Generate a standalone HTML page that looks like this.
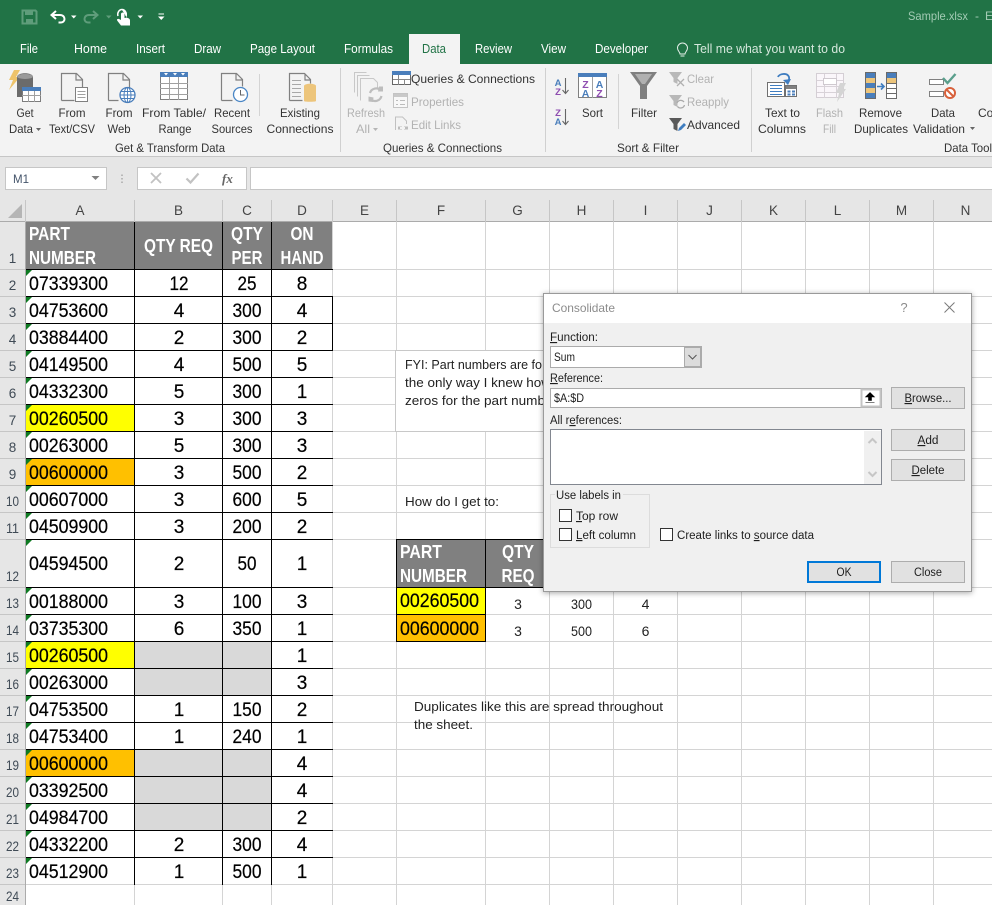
<!DOCTYPE html>
<html><head><meta charset="utf-8"><title>Sample.xlsx - Excel</title>
<style>
html,body{margin:0;padding:0;width:992px;height:905px;overflow:hidden;background:#fff}
svg{display:block;position:absolute;left:0;top:0}
text{font-family:"Liberation Sans",Arial,sans-serif;white-space:pre}
.t{font-size:12.5px;fill:#fff}
.r{font-size:12px;fill:#333;text-anchor:middle}
.rl{font-size:12px;fill:#333}
.g{font-size:12px;fill:#b2b2b2;text-anchor:middle}
.gl{font-size:12px;fill:#b2b2b2}
.c{font-size:13.5px;fill:#444;text-anchor:middle}
.n{font-size:13.5px;fill:#3f4a55;text-anchor:middle}
.a{font-size:19px;fill:#000;stroke:#000;stroke-width:.2}
.m{font-size:19px;fill:#000;text-anchor:middle;stroke:#000;stroke-width:.2}
.h{font-size:18px;font-weight:bold;fill:#fff}
.hm{font-size:18px;font-weight:bold;fill:#fff;text-anchor:middle}
.s{font-size:14px;fill:#222;text-anchor:middle}
.k{font-size:13px;fill:#222}
.d{font-size:11.5px;fill:#1e1e1e}
.dm{font-size:11.5px;fill:#1e1e1e;text-anchor:middle}
.u{text-decoration:underline}
</style></head><body>
<svg width="992" height="905" viewBox="0 0 992 905" xmlns="http://www.w3.org/2000/svg">
<defs>
<filter id="sh" x="-5%" y="-5%" width="110%" height="110%"><feDropShadow dx="0" dy="1" stdDeviation="3" flood-color="#000" flood-opacity=".35"/></filter>
</defs>
<rect width="992" height="905" fill="#fff"/>

<!-- Title bar -->
<rect width="992" height="64" fill="#217346"/>
<g id="qat">
<path d="M22.500 10.500h13l1 1v12h-14z" fill="none" stroke="#5f9d7b" stroke-width="2"/>
<rect x="25" y="10" width="8" height="5" fill="#5f9d7b"/><rect x="26" y="19" width="7" height="5" fill="#5f9d7b"/>
<path d="M56 11l-4.500 4 4.500 4M52 15h8c3.500 0 4.500 2.500 4.500 4s-1 3.500-4 3.500h-2" fill="none" stroke="#fff" stroke-width="2"/>
<path d="M71 15.500h5.500l-2.750 3z" fill="#fff"/>
<path d="M93 11l4.500 4-4.500 4M97 15h-8c-3.500 0-4.500 2.500-4.500 4s1 3.500 4 3.500h2" fill="none" stroke="#5f9d7b" stroke-width="2"/>
<path d="M106 15.500h5.500l-2.750 3z" fill="#5f9d7b"/>
<path d="M122 10c3 0 5 2 5 4.500 0 1.500-.5 2.500-1.500 3.500h-1v-4c0-2-3.500-2-3.500 0v6l-2 -1c-2-.5-2.500 1-1.500 2l3.500 4.500h9v-5c0-2-2-2.500-4-3v-1.500" fill="#fff"/>
<path d="M118 16c-1-3 1-6.500 4-6.500s5 3.500 4 6.500" fill="none" stroke="#fff" stroke-width="1.500"/>
<path d="M137.500 15.500h5.500l-2.750 3z" fill="#fff"/>
<rect x="158.500" y="13.500" width="5.500" height="1" fill="#fff"/><path d="M158 16.500h6.500l-3.250 3.500z" fill="#fff"/>
</g>
<text x="908" y="20" font-size="12" fill="#a3cbb4" textLength="60" lengthAdjust="spacingAndGlyphs">Sample.xlsx</text>
<text x="975" y="20" font-size="12" fill="#a3cbb4">-</text>
<text x="985" y="20" font-size="12" fill="#a3cbb4">E</text>

<!-- Tabs -->
<rect x="409" y="34" width="51" height="30" fill="#f3f3f3"/>
<text class="t" x="20" y="53" textLength="18" lengthAdjust="spacingAndGlyphs">File</text>
<text class="t" x="74" y="53" textLength="33" lengthAdjust="spacingAndGlyphs">Home</text>
<text class="t" x="136" y="53" textLength="29" lengthAdjust="spacingAndGlyphs">Insert</text>
<text class="t" x="194" y="53" textLength="27" lengthAdjust="spacingAndGlyphs">Draw</text>
<text class="t" x="250" y="53" textLength="65" lengthAdjust="spacingAndGlyphs">Page Layout</text>
<text class="t" x="344" y="53" textLength="49" lengthAdjust="spacingAndGlyphs">Formulas</text>
<text class="t" x="422" y="53" style="fill:#217346" textLength="24" lengthAdjust="spacingAndGlyphs">Data</text>
<text class="t" x="475" y="53" textLength="37" lengthAdjust="spacingAndGlyphs">Review</text>
<text class="t" x="541" y="53" textLength="25" lengthAdjust="spacingAndGlyphs">View</text>
<text class="t" x="595" y="53" textLength="53" lengthAdjust="spacingAndGlyphs">Developer</text>
<path d="M680 54c0-2-2.500-3-2.500-6a5 5 0 0 1 10 0c0 3-2.500 4-2.500 6zM680.500 56h4" fill="none" stroke="#e6f0ea" stroke-width="1"/>
<text class="t" x="694" y="53" style="fill:#d5e7dc" textLength="151" lengthAdjust="spacingAndGlyphs">Tell me what you want to do</text>

<!-- Ribbon -->
<rect y="64" width="992" height="92" fill="#f3f3f3"/>
<rect y="156" width="992" height="1" fill="#c6c6c6"/>
<rect y="157" width="992" height="65" fill="#e6e6e6"/>
<path d="M340.500 68v84M545.500 68v84M751.500 68v84" stroke="#d0d0d0"/>
<path d="M259.500 74v42M618.500 74v55" stroke="#d4d4d4"/>

<!-- Get Data -->
<path d="M14 70h6l-4 7h4l-11 13 4-10H9z" fill="#eec36a"/>
<path d="M17 77c0-5 16-5 16 0v20H17z" fill="#6b6b6b"/>
<ellipse cx="25" cy="76.500" rx="8" ry="2.500" fill="#9a9a9a"/>
<rect x="22.500" y="87.500" width="18" height="14" fill="#fff" stroke="#7d7d7d"/>
<rect x="22" y="87" width="19" height="4" fill="#4a7ebb"/>
<path d="M22 95.500h19M28.500 91v11M34.500 91v11" stroke="#a0a0a0"/>
<!-- From Text -->
<path d="M61.500 100.500v-27h15l6 6v8M76 73.500v6.500h6.500M61.500 100.500h13" fill="none" stroke="#808080" stroke-width="1.200"/>
<rect x="75.500" y="87.500" width="12" height="14" fill="#fff" stroke="#808080"/>
<path d="M77.500 91.500h8M77.500 94.500h8M77.500 97.500h8" stroke="#a0a0a0"/>
<!-- From Web -->
<path d="M108.500 100.500v-27h15l6 6v8M123 73.500v6.500h6.500M108.500 100.500h10" fill="none" stroke="#808080" stroke-width="1.200"/>
<circle cx="127.500" cy="95" r="7.500" fill="#fff" stroke="#4a7ebb" stroke-width="1.300"/>
<ellipse cx="127.500" cy="95" rx="3.500" ry="7.500" fill="none" stroke="#4a7ebb"/>
<path d="M120 95h15M121 91.500h13M121 98.500h13M127.500 87.500v15" stroke="#4a7ebb" stroke-width=".9"/>
<!-- From Table -->
<rect x="160.500" y="72.500" width="27" height="27" fill="#fff" stroke="#808080"/>
<rect x="160" y="72" width="28" height="5" fill="#4a7ebb"/>
<path d="M160 83.500h28M160 88.500h28M160 94.500h28M169.500 77v23M178.500 77v23" stroke="#a0a0a0"/>
<path d="M164 73h4l-2 2.500zM173 73h4l-2 2.500zM181 73h4l-2 2.500z" fill="#fff"/>
<!-- Recent -->
<path d="M221.500 100.500v-27h15l6 6v7M236 73.500v6.500h6.500M221.500 100.500h11" fill="none" stroke="#808080" stroke-width="1.200"/>
<circle cx="240.500" cy="94.500" r="7" fill="#fff" stroke="#4a86c5" stroke-width="1.300"/>
<path d="M240.500 90v5h4" fill="none" stroke="#666"/>
<!-- Existing -->
<path d="M289.500 100.500v-27h15l6 6v4M305 73.500v6.500h5.500M289.500 100.500h13" fill="none" stroke="#808080" stroke-width="1.200"/>
<path d="M292 80.500h9M292 84.500h9M292 88.500h9M292 92.500h9M292 96.500h9" stroke="#a8a8a8"/>
<path d="M304 86c0-3 12-3 12 0v15c0 1-12 1-12 0z" fill="#edc57b"/>
<!-- Refresh -->
<g fill="none" stroke="#c8c8c8" stroke-width="1">
<path d="M354.500 92.500v-20h12M357.500 96.500v-21h12M360.500 100.500v-22h13l4 4v6"/>
</g>
<path d="M370 93a6.500 6.500 0 0 1 11-2.500M381.500 96a6.500 6.500 0 0 1-11 3" fill="none" stroke="#bdbdbd" stroke-width="2.200"/>
<path d="M379 86.500h4v5h-5zM373 102l-4.500 -.500v-5l5 1z" fill="#bdbdbd"/>
<!-- Queries small -->
<rect x="392.500" y="71.500" width="18" height="13" fill="#fff" stroke="#666"/>
<rect x="392" y="71" width="19" height="4" fill="#4a7ebb"/>
<path d="M393 79.500h17M398.500 75v10M404.500 79v6" stroke="#888"/>
<rect x="393.500" y="93.500" width="14" height="14" fill="#f8f8f8" stroke="#c4c4c4"/>
<rect x="394" y="94" width="13" height="3" fill="#c9c9c9"/>
<path d="M396 100.500h2M400 100.500h5M396 104.500h2M400 104.500h5" stroke="#bcbcbc"/>
<path d="M395.500 130v-13h7l4 4v3" fill="none" stroke="#c0c0c0"/>
<path d="M398 128h4M404 128h4" stroke="#bcbcbc" stroke-width="3" fill="none"/>
<rect x="400" y="127" width="5" height="2" fill="#f3f3f3"/>

<!-- Ribbon labels -->
<text class="r" x="25" y="117" textLength="17" lengthAdjust="spacingAndGlyphs">Get</text>
<text class="r" x="21" y="133" textLength="24" lengthAdjust="spacingAndGlyphs">Data</text>
<path d="M36 128h5l-2.500 3zM970 127h5l-2.500 3z" fill="#666"/>
<path d="M373 128h5l-2.500 3z" fill="#b5b5b5"/>
<text class="r" x="72" y="117" textLength="27" lengthAdjust="spacingAndGlyphs">From</text>
<text class="r" x="72" y="133" textLength="46" lengthAdjust="spacingAndGlyphs">Text/CSV</text>
<text class="r" x="119" y="117" textLength="27" lengthAdjust="spacingAndGlyphs">From</text>
<text class="r" x="119" y="133" textLength="23" lengthAdjust="spacingAndGlyphs">Web</text>
<text class="r" x="174" y="117" textLength="64" lengthAdjust="spacingAndGlyphs">From Table/</text>
<text class="r" x="175" y="133" textLength="33" lengthAdjust="spacingAndGlyphs">Range</text>
<text class="r" x="232" y="117" textLength="36" lengthAdjust="spacingAndGlyphs">Recent</text>
<text class="r" x="232" y="133" textLength="41" lengthAdjust="spacingAndGlyphs">Sources</text>
<text class="r" x="300" y="117" textLength="40" lengthAdjust="spacingAndGlyphs">Existing</text>
<text class="r" x="300" y="133" textLength="67" lengthAdjust="spacingAndGlyphs">Connections</text>
<text class="g" x="366" y="117" textLength="38" lengthAdjust="spacingAndGlyphs">Refresh</text>
<text class="g" x="363" y="133" textLength="14" lengthAdjust="spacingAndGlyphs">All</text>
<text class="rl" x="411" y="83" textLength="124" lengthAdjust="spacingAndGlyphs">Queries &amp; Connections</text>
<text class="gl" x="411" y="106" textLength="53" lengthAdjust="spacingAndGlyphs">Properties</text>
<text class="gl" x="411" y="129" textLength="50" lengthAdjust="spacingAndGlyphs">Edit Links</text>
<text class="r" x="170" y="152" font-size="11.500" textLength="110" lengthAdjust="spacingAndGlyphs">Get &amp; Transform Data</text>
<text class="r" x="442.500" y="152" textLength="119" lengthAdjust="spacingAndGlyphs">Queries &amp; Connections</text>
<text class="r" x="648" y="152" textLength="62" lengthAdjust="spacingAndGlyphs">Sort &amp; Filter</text>
<text class="rl" x="944" y="152" textLength="48" lengthAdjust="spacingAndGlyphs">Data Tool</text>

<!-- Sort icons -->
<text x="558" y="86" font-size="9.500" font-weight="bold" fill="#4a7ebb" text-anchor="middle">A</text>
<text x="558" y="95" font-size="9.500" font-weight="bold" fill="#8e4db0" text-anchor="middle">Z</text>
<path d="M565.500 78v15M562.500 90l3 3.500 3-3.500" fill="none" stroke="#666" stroke-width="1.100"/>
<text x="558" y="116" font-size="9.500" font-weight="bold" fill="#8e4db0" text-anchor="middle">Z</text>
<text x="558" y="125" font-size="9.500" font-weight="bold" fill="#4a7ebb" text-anchor="middle">A</text>
<path d="M565.500 109v15M562.500 121l3 3.500 3-3.500" fill="none" stroke="#666" stroke-width="1.100"/>
<rect x="578.500" y="73.500" width="28" height="24" fill="#fff" stroke="#808080"/>
<rect x="578" y="73" width="29" height="4" fill="#4a7ebb"/>
<path d="M592.500 77v21" stroke="#a0a0a0"/>
<text x="585.500" y="88" font-size="10.500" font-weight="bold" fill="#8e4db0" text-anchor="middle">Z</text>
<text x="585.500" y="97" font-size="10.500" font-weight="bold" fill="#4a7ebb" text-anchor="middle">A</text>
<text x="599.500" y="88" font-size="10.500" font-weight="bold" fill="#4a7ebb" text-anchor="middle">A</text>
<text x="599.500" y="97" font-size="10.500" font-weight="bold" fill="#8e4db0" text-anchor="middle">Z</text>
<text class="r" x="592.500" y="117" textLength="21" lengthAdjust="spacingAndGlyphs">Sort</text>
<!-- Filter -->
<path d="M630 72h27l-10 14v13h-7V86z" fill="#7f7f7f"/>
<path d="M635 74h17l-7 10h-3z" fill="#b0b0b0"/>
<text class="r" x="644" y="117" textLength="26" lengthAdjust="spacingAndGlyphs">Filter</text>
<path d="M669 72h13l-4.500 6v6l-4-2v-4z" fill="#b8b8b8"/>
<path d="M677 79l7 7M684 79l-7 7" stroke="#b0b0b0" stroke-width="1.300"/>
<path d="M669 95h13l-4.500 6v6l-4-2v-4z" fill="#b8b8b8"/>
<path d="M677 103a4 4 0 0 1 7-1M684.500 105a4 4 0 0 1-7 1.500" fill="none" stroke="#aaa" stroke-width="1.300"/>
<path d="M669 118h13l-4.500 6v7l-4-2v-5z" fill="#595959"/>
<path d="M678 131l1-3 5-5 2 2-5 5z" fill="#3f7dc0"/>
<text class="gl" x="687" y="83" textLength="27" lengthAdjust="spacingAndGlyphs">Clear</text>
<text class="gl" x="687" y="106" textLength="42" lengthAdjust="spacingAndGlyphs">Reapply</text>
<text class="rl" x="687" y="129" textLength="53" lengthAdjust="spacingAndGlyphs">Advanced</text>
<!-- Text to Columns -->
<rect x="767.500" y="82.500" width="17" height="14" fill="#fff" stroke="#707070"/>
<path d="M770 85.500h12M770 88.500h12M770 91.500h12M770 94.500h12" stroke="#3f7dc0"/>
<rect x="785.500" y="85.500" width="11" height="11" fill="#fff" stroke="#707070"/>
<rect x="786" y="86" width="10" height="3" fill="#808080"/>
<path d="M787.500 90.500h3v2h-3zM792 90.500h3v2h-3zM787.500 93.500h3v2h-3zM792 93.500h3v2h-3z" fill="#4a7ebb"/>
<path d="M778 77c1-3 9-5 11 0 .5 2-.5 4-2 5" fill="none" stroke="#3f7dc0" stroke-width="1.800"/>
<path d="M783 80l5 5 3-6z" fill="#3f7dc0"/>
<text class="r" x="782.500" y="117" textLength="35" lengthAdjust="spacingAndGlyphs">Text to</text>
<text class="r" x="782" y="133" textLength="48" lengthAdjust="spacingAndGlyphs">Columns</text>
<!-- Flash Fill -->
<rect x="816.500" y="73.500" width="27" height="24" fill="#faf6fa" stroke="#d4ced4"/>
<path d="M817 80.500h26M817 86.500h26M817 92.500h26M824.500 74v24M836.500 74v24" stroke="#d8d2d8"/>
<rect x="823.500" y="78.500" width="13" height="6" fill="#fff" stroke="#cfc9cf"/>
<path d="M840 83h6l-3 6h3l-9 13 2-9h-3z" fill="#d4d4d4"/>
<text class="g" x="829.500" y="117" textLength="27" lengthAdjust="spacingAndGlyphs">Flash</text>
<text class="g" x="829.500" y="133" textLength="13" lengthAdjust="spacingAndGlyphs">Fill</text>
<!-- Remove Duplicates -->
<rect x="865" y="72" width="11" height="27" fill="#4a7ebb"/>
<rect x="866" y="78" width="9" height="5" fill="#edc57b"/><rect x="866" y="88" width="9" height="5" fill="#edc57b"/>
<rect x="865.500" y="72.500" width="10" height="26" fill="none" stroke="#6a6a6a"/>
<rect x="886.500" y="72.500" width="10" height="26" fill="#fff" stroke="#6a6a6a"/>
<rect x="887" y="73" width="9" height="5" fill="#4a7ebb"/><rect x="887" y="78" width="9" height="5" fill="#edc57b"/>
<path d="M887 83.500h9M887 88.500h9M887 93.500h9" stroke="#6a6a6a"/>
<path d="M877 86.500h6M881 83.500l3 3-3 3" fill="none" stroke="#3f7dc0" stroke-width="1.600"/>
<text class="r" x="880.500" y="117" textLength="43" lengthAdjust="spacingAndGlyphs">Remove</text>
<text class="r" x="881" y="133" textLength="54" lengthAdjust="spacingAndGlyphs">Duplicates</text>
<!-- Data Validation -->
<rect x="929.500" y="79.500" width="14" height="5" fill="#fff" stroke="#808080"/>
<rect x="929.500" y="91.500" width="14" height="5" fill="#fff" stroke="#808080"/>
<path d="M943 78l4.500 5 8-9" fill="none" stroke="#5a9f8c" stroke-width="2.400"/>
<circle cx="950" cy="93" r="5" fill="#fff" stroke="#d8613c" stroke-width="2"/>
<path d="M946.500 89.500l7 7" stroke="#d8613c" stroke-width="2"/>
<text class="r" x="943" y="117" textLength="24" lengthAdjust="spacingAndGlyphs">Data</text>
<text class="r" x="939" y="133" textLength="52" lengthAdjust="spacingAndGlyphs">Validation</text>
<text class="rl" x="978" y="117">Co</text>

<!-- Formula bar -->
<rect x="5.500" y="167.500" width="101" height="22" fill="#fff" stroke="#c6c6c6"/>
<text x="13" y="183" font-size="12" fill="#44546a" textLength="16" lengthAdjust="spacingAndGlyphs">M1</text>
<path d="M91.500 176h8l-4 4z" fill="#808080"/>
<path d="M122 174.500v1.500M122 178v1.500M122 181.500v1.500" stroke="#a8a8a8" stroke-width="1.500"/>
<rect x="137.500" y="167.500" width="109" height="22" fill="#fff" stroke="#c6c6c6"/>
<path d="M151 173l10 10M161 173l-10 10" stroke="#c2c2c2" stroke-width="1.800"/>
<path d="M186.500 178.500l4 4 8-9" fill="none" stroke="#c2c2c2" stroke-width="2.200"/>
<text x="222" y="183" font-size="13" font-style="italic" font-weight="bold" fill="#666" style="font-family:'Liberation Serif',serif">fx</text>
<rect x="250.500" y="167.500" width="745" height="22" fill="#fff" stroke="#c6c6c6"/>

<!-- Column header -->
<rect x="0" y="197" width="992" height="25" fill="#e6e6e6"/>
<rect y="221" width="992" height="1" fill="#ababab"/>
<path d="M8 218h14v-14z" fill="#b5b5b5"/>
<path d="M25.500 200v22M134.500 200v22M222.500 200v22M271.500 200v22M332.500 200v22M396.500 200v22M485.500 200v22M549.500 200v22M613.500 200v22M677.500 200v22M741.500 200v22M805.500 200v22M869.500 200v22M933.500 200v22" stroke="#c6c6c6"/>
<text class="c" x="80" y="215">A</text><text class="c" x="178.500" y="215">B</text><text class="c" x="247" y="215">C</text><text class="c" x="302" y="215">D</text><text class="c" x="364.500" y="215">E</text><text class="c" x="441" y="215">F</text><text class="c" x="517.500" y="215">G</text><text class="c" x="581.500" y="215">H</text><text class="c" x="645.500" y="215">I</text><text class="c" x="709.500" y="215">J</text><text class="c" x="773.500" y="215">K</text><text class="c" x="837.500" y="215">L</text><text class="c" x="901.500" y="215">M</text><text class="c" x="965.500" y="215">N</text>

<!-- Row header -->
<rect x="0" y="222" width="26" height="683" fill="#e6e6e6"/>
<path d="M25.500 222v683" stroke="#ababab"/>
<path d="M0 269.500h25M0 296.500h25M0 323.500h25M0 350.500h25M0 377.500h25M0 404.500h25M0 431.500h25M0 458.500h25M0 485.500h25M0 512.500h25M0 539.500h25M0 587.500h25M0 614.500h25M0 641.500h25M0 668.500h25M0 695.500h25M0 722.500h25M0 749.500h25M0 776.500h25M0 803.500h25M0 830.500h25M0 857.500h25M0 884.500h25" stroke="#c6c6c6"/>
<g transform="translate(0,-1)">
<text class="n" x="12.500" y="264">1</text><text class="n" x="12.500" y="291">2</text><text class="n" x="12.500" y="318">3</text><text class="n" x="12.500" y="345">4</text><text class="n" x="12.500" y="372">5</text><text class="n" x="12.500" y="399">6</text><text class="n" x="12.500" y="426">7</text><text class="n" x="12.500" y="453">8</text><text class="n" x="12.500" y="480">9</text>
<text class="n" x="12.500" y="507" textLength="13" lengthAdjust="spacingAndGlyphs">10</text><text class="n" x="12.500" y="534" textLength="13" lengthAdjust="spacingAndGlyphs">11</text><text class="n" x="12.500" y="582" textLength="13" lengthAdjust="spacingAndGlyphs">12</text><text class="n" x="12.500" y="609" textLength="13" lengthAdjust="spacingAndGlyphs">13</text><text class="n" x="12.500" y="636" textLength="13" lengthAdjust="spacingAndGlyphs">14</text><text class="n" x="12.500" y="663" textLength="13" lengthAdjust="spacingAndGlyphs">15</text><text class="n" x="12.500" y="690" textLength="13" lengthAdjust="spacingAndGlyphs">16</text><text class="n" x="12.500" y="717" textLength="13" lengthAdjust="spacingAndGlyphs">17</text><text class="n" x="12.500" y="744" textLength="13" lengthAdjust="spacingAndGlyphs">18</text><text class="n" x="12.500" y="771" textLength="13" lengthAdjust="spacingAndGlyphs">19</text><text class="n" x="12.500" y="798" textLength="13" lengthAdjust="spacingAndGlyphs">20</text><text class="n" x="12.500" y="825" textLength="13" lengthAdjust="spacingAndGlyphs">21</text><text class="n" x="12.500" y="852" textLength="13" lengthAdjust="spacingAndGlyphs">22</text><text class="n" x="12.500" y="879" textLength="13" lengthAdjust="spacingAndGlyphs">23</text><text class="n" x="12.500" y="902" textLength="13" lengthAdjust="spacingAndGlyphs">24</text>
</g>

<!-- Gridlines -->
<path d="M333 269.500h659M333 296.500h659M333 323.500h659M333 350.500h659M333 377.500h659M333 404.500h659M333 431.500h659M333 458.500h659M333 485.500h659M333 512.500h659M333 539.500h659M333 587.500h659M333 614.500h659M333 641.500h659M333 668.500h659M333 695.500h659M333 722.500h659M333 749.500h659M333 776.500h659M333 803.500h659M333 830.500h659M333 857.500h659M26 884.500h966" stroke="#d4d4d4"/>
<path d="M332.500 222v683M396.500 222v683M485.500 222v683M549.500 222v683M613.500 222v683M677.500 222v683M741.500 222v683M805.500 222v683M869.500 222v683M933.500 222v683M134.500 885v20M222.500 885v20M271.500 885v20" stroke="#d4d4d4"/>

<!-- Cell fills -->
<rect x="26" y="222" width="306" height="47" fill="#808080"/>
<rect x="26" y="405" width="108" height="26" fill="#ffff00"/>
<rect x="26" y="459" width="108" height="26" fill="#ffc000"/>
<rect x="26" y="642" width="108" height="26" fill="#ffff00"/>
<rect x="26" y="750" width="108" height="26" fill="#ffc000"/>
<rect x="135" y="642" width="136" height="53" fill="#d9d9d9"/>
<rect x="135" y="750" width="136" height="80" fill="#d9d9d9"/>
<!-- Black borders -->
<path d="M26 269.500h307M26 296.500h307M26 323.500h307M26 350.500h307M26 377.500h307M26 404.500h307M26 431.500h307M26 458.500h307M26 485.500h307M26 512.500h307M26 539.500h307M26 587.500h307M26 614.500h307M26 641.500h307M26 668.500h307M26 695.500h307M26 722.500h307M26 749.500h307M26 776.500h307M26 803.500h307M26 830.500h307M26 857.500h307M134.500 222v663M222.500 222v663M271.500 222v663M332.500 296v54" stroke="#000"/>
<!-- green triangles -->
<path d="M26 270h6l-6 6zM26 297h6l-6 6zM26 324h6l-6 6zM26 351h6l-6 6zM26 378h6l-6 6zM26 405h6l-6 6zM26 432h6l-6 6zM26 459h6l-6 6zM26 486h6l-6 6zM26 513h6l-6 6zM26 540h6l-6 6zM26 588h6l-6 6zM26 615h6l-6 6zM26 642h6l-6 6zM26 669h6l-6 6zM26 696h6l-6 6zM26 723h6l-6 6zM26 750h6l-6 6zM26 777h6l-6 6zM26 804h6l-6 6zM26 831h6l-6 6zM26 858h6l-6 6zM397 588h6l-6 6zM397 615h6l-6 6z" fill="#0e7a22"/>

<!-- Header text -->
<text class="h" x="29" y="240" textLength="41" lengthAdjust="spacingAndGlyphs">PART</text>
<text class="h" x="29" y="264" textLength="67" lengthAdjust="spacingAndGlyphs">NUMBER</text>
<text class="hm" x="178.500" y="252" textLength="69" lengthAdjust="spacingAndGlyphs">QTY REQ</text>
<text class="hm" x="247" y="240" textLength="32" lengthAdjust="spacingAndGlyphs">QTY</text>
<text class="hm" x="247" y="264" textLength="31" lengthAdjust="spacingAndGlyphs">PER</text>
<text class="hm" x="302" y="240" textLength="23" lengthAdjust="spacingAndGlyphs">ON</text>
<text class="hm" x="302" y="264" textLength="43" lengthAdjust="spacingAndGlyphs">HAND</text>

<!-- Data -->
<g transform="translate(0,-1)">
<text class="a" x="29" y="291" textLength="79" lengthAdjust="spacingAndGlyphs">07339300</text><text class="m" x="179" y="291" textLength="19" lengthAdjust="spacingAndGlyphs">12</text><text class="m" x="247" y="291" textLength="19" lengthAdjust="spacingAndGlyphs">25</text><text class="m" x="302" y="291">8</text>
<text class="a" x="29" y="318" textLength="79" lengthAdjust="spacingAndGlyphs">04753600</text><text class="m" x="179" y="318">4</text><text class="m" x="247" y="318" textLength="29" lengthAdjust="spacingAndGlyphs">300</text><text class="m" x="302" y="318">4</text>
<text class="a" x="29" y="345" textLength="79" lengthAdjust="spacingAndGlyphs">03884400</text><text class="m" x="179" y="345">2</text><text class="m" x="247" y="345" textLength="29" lengthAdjust="spacingAndGlyphs">300</text><text class="m" x="302" y="345">2</text>
<text class="a" x="29" y="372" textLength="79" lengthAdjust="spacingAndGlyphs">04149500</text><text class="m" x="179" y="372">4</text><text class="m" x="247" y="372" textLength="29" lengthAdjust="spacingAndGlyphs">500</text><text class="m" x="302" y="372">5</text>
<text class="a" x="29" y="399" textLength="79" lengthAdjust="spacingAndGlyphs">04332300</text><text class="m" x="179" y="399">5</text><text class="m" x="247" y="399" textLength="29" lengthAdjust="spacingAndGlyphs">300</text><text class="m" x="302" y="399">1</text>
<text class="a" x="29" y="426" textLength="79" lengthAdjust="spacingAndGlyphs">00260500</text><text class="m" x="179" y="426">3</text><text class="m" x="247" y="426" textLength="29" lengthAdjust="spacingAndGlyphs">300</text><text class="m" x="302" y="426">3</text>
<text class="a" x="29" y="453" textLength="79" lengthAdjust="spacingAndGlyphs">00263000</text><text class="m" x="179" y="453">5</text><text class="m" x="247" y="453" textLength="29" lengthAdjust="spacingAndGlyphs">300</text><text class="m" x="302" y="453">3</text>
<text class="a" x="29" y="480" textLength="79" lengthAdjust="spacingAndGlyphs">00600000</text><text class="m" x="179" y="480">3</text><text class="m" x="247" y="480" textLength="29" lengthAdjust="spacingAndGlyphs">500</text><text class="m" x="302" y="480">2</text>
<text class="a" x="29" y="507" textLength="79" lengthAdjust="spacingAndGlyphs">00607000</text><text class="m" x="179" y="507">3</text><text class="m" x="247" y="507" textLength="29" lengthAdjust="spacingAndGlyphs">600</text><text class="m" x="302" y="507">5</text>
<text class="a" x="29" y="534" textLength="79" lengthAdjust="spacingAndGlyphs">04509900</text><text class="m" x="179" y="534">3</text><text class="m" x="247" y="534" textLength="29" lengthAdjust="spacingAndGlyphs">200</text><text class="m" x="302" y="534">2</text>
<text class="a" x="29" y="571" textLength="79" lengthAdjust="spacingAndGlyphs">04594500</text><text class="m" x="179" y="571">2</text><text class="m" x="247" y="571" textLength="19" lengthAdjust="spacingAndGlyphs">50</text><text class="m" x="302" y="571">1</text>
<text class="a" x="29" y="609" textLength="79" lengthAdjust="spacingAndGlyphs">00188000</text><text class="m" x="179" y="609">3</text><text class="m" x="247" y="609" textLength="29" lengthAdjust="spacingAndGlyphs">100</text><text class="m" x="302" y="609">3</text>
<text class="a" x="29" y="636" textLength="79" lengthAdjust="spacingAndGlyphs">03735300</text><text class="m" x="179" y="636">6</text><text class="m" x="247" y="636" textLength="29" lengthAdjust="spacingAndGlyphs">350</text><text class="m" x="302" y="636">1</text>
<text class="a" x="29" y="663" textLength="79" lengthAdjust="spacingAndGlyphs">00260500</text><text class="m" x="302" y="663">1</text>
<text class="a" x="29" y="690" textLength="79" lengthAdjust="spacingAndGlyphs">00263000</text><text class="m" x="302" y="690">3</text>
<text class="a" x="29" y="717" textLength="79" lengthAdjust="spacingAndGlyphs">04753500</text><text class="m" x="179" y="717">1</text><text class="m" x="247" y="717" textLength="29" lengthAdjust="spacingAndGlyphs">150</text><text class="m" x="302" y="717">2</text>
<text class="a" x="29" y="744" textLength="79" lengthAdjust="spacingAndGlyphs">04753400</text><text class="m" x="179" y="744">1</text><text class="m" x="247" y="744" textLength="29" lengthAdjust="spacingAndGlyphs">240</text><text class="m" x="302" y="744">1</text>
<text class="a" x="29" y="771" textLength="79" lengthAdjust="spacingAndGlyphs">00600000</text><text class="m" x="302" y="771">4</text>
<text class="a" x="29" y="798" textLength="79" lengthAdjust="spacingAndGlyphs">03392500</text><text class="m" x="302" y="798">4</text>
<text class="a" x="29" y="825" textLength="79" lengthAdjust="spacingAndGlyphs">04984700</text><text class="m" x="302" y="825">2</text>
<text class="a" x="29" y="852" textLength="79" lengthAdjust="spacingAndGlyphs">04332200</text><text class="m" x="179" y="852">2</text><text class="m" x="247" y="852" textLength="29" lengthAdjust="spacingAndGlyphs">300</text><text class="m" x="302" y="852">4</text>
<text class="a" x="29" y="879" textLength="79" lengthAdjust="spacingAndGlyphs">04512900</text><text class="m" x="179" y="879">1</text><text class="m" x="247" y="879" textLength="29" lengthAdjust="spacingAndGlyphs">500</text><text class="m" x="302" y="879">1</text>
</g>

<!-- Text box -->
<rect x="395.500" y="350.500" width="200" height="81" fill="#fff" stroke="#c8c8c8"/>
<text class="k" x="405" y="369" textLength="137" lengthAdjust="spacingAndGlyphs">FYI: Part numbers are fo</text>
<text class="k" x="405" y="387" textLength="146" lengthAdjust="spacingAndGlyphs">the only way I knew how</text>
<text class="k" x="405" y="405" textLength="140" lengthAdjust="spacingAndGlyphs">zeros for the part numb</text>
<text class="k" x="405" y="506" textLength="94" lengthAdjust="spacingAndGlyphs">How do I get to:</text>
<text class="k" x="414" y="711" textLength="249" lengthAdjust="spacingAndGlyphs">Duplicates like this are spread throughout</text>
<text class="k" x="414" y="729" textLength="59" lengthAdjust="spacingAndGlyphs">the sheet.</text>

<!-- Second table -->
<rect x="397" y="540" width="200" height="47" fill="#808080"/>
<rect x="397" y="588" width="88" height="26" fill="#ffff00"/>
<rect x="397" y="615" width="88" height="26" fill="#ffc000"/>
<path d="M396 539.500h204M396 587.500h204M396.500 539v103M485.500 539v103M396 614.500h90M396 641.500h90" stroke="#000"/>
<text class="h" x="400" y="558" textLength="42" lengthAdjust="spacingAndGlyphs">PART</text>
<text class="h" x="400" y="582" textLength="67" lengthAdjust="spacingAndGlyphs">NUMBER</text>
<text class="hm" x="518" y="558" textLength="32" lengthAdjust="spacingAndGlyphs">QTY</text>
<text class="hm" x="518" y="582" textLength="33" lengthAdjust="spacingAndGlyphs">REQ</text>
<text class="a" x="400" y="607" textLength="79" lengthAdjust="spacingAndGlyphs">00260500</text>
<text class="a" x="400" y="635" textLength="79" lengthAdjust="spacingAndGlyphs">00600000</text>
<text class="s" x="518" y="609">3</text><text class="s" x="581.500" y="609" textLength="21" lengthAdjust="spacingAndGlyphs">300</text><text class="s" x="645.500" y="609">4</text>
<text class="s" x="518" y="636">3</text><text class="s" x="581.500" y="636" textLength="21" lengthAdjust="spacingAndGlyphs">500</text><text class="s" x="645.500" y="636">6</text>

<!-- Dialog -->
<rect x="543.500" y="293.500" width="428" height="298" fill="#f0f0f0" stroke="#9a9a9a" filter="url(#sh)"/>
<rect x="544" y="294" width="427" height="29" fill="#fff"/>
<text x="552" y="312" font-size="12" fill="#8c8c8c" textLength="63" lengthAdjust="spacingAndGlyphs">Consolidate</text>
<text x="904" y="312" font-size="13" fill="#8c8c8c" text-anchor="middle">?</text>
<path d="M944.500 302.500l10 10M954.500 302.500l-10 10" stroke="#7a7a7a" stroke-width="1"/>

<text class="d" x="550" y="341" textLength="48" lengthAdjust="spacingAndGlyphs"><tspan class="u">F</tspan>unction:</text>
<rect x="550.500" y="346.500" width="151" height="21" fill="#fff" stroke="#ababab"/>
<rect x="684.500" y="347.500" width="16" height="19" fill="#dcdcdc" stroke="#ababab"/>
<path d="M688.500 355l4 4 4-4" fill="none" stroke="#555"/>
<text class="d" x="554" y="361" textLength="21" lengthAdjust="spacingAndGlyphs">Sum</text>

<text class="d" x="550" y="382" textLength="53" lengthAdjust="spacingAndGlyphs"><tspan class="u">R</tspan>eference:</text>
<rect x="550.500" y="388.500" width="331" height="19" fill="#fff" stroke="#ababab"/>
<rect x="861.500" y="389.500" width="19" height="17" fill="#fff" stroke="#c4c4c4" stroke-width="2"/>
<path d="M870 392.500l4.500 4.500h-3v3.500h-3V397h-3zM865.500 402.500h9" fill="#000" stroke="#000" stroke-width=".6"/>
<text class="d" x="554" y="402" textLength="30" lengthAdjust="spacingAndGlyphs">$A:$D</text>
<rect x="891.500" y="387.500" width="73" height="21" fill="#e1e1e1" stroke="#adadad"/>
<text class="dm" x="928" y="402" textLength="47" lengthAdjust="spacingAndGlyphs"><tspan class="u">B</tspan>rowse...</text>

<text class="d" x="550" y="424" textLength="72" lengthAdjust="spacingAndGlyphs">All r<tspan class="u">e</tspan>ferences:</text>
<rect x="550.500" y="429.500" width="331" height="55" fill="#fff" stroke="#828790"/>
<rect x="864" y="431" width="17" height="53" fill="#f0f0f0"/>
<path d="M868.500 443l4-4 4 4M868.500 472l4 4 4-4" fill="none" stroke="#c6c6c6" stroke-width="2"/>
<rect x="891.500" y="429.500" width="73" height="21" fill="#e1e1e1" stroke="#adadad"/>
<text class="dm" x="928" y="444" textLength="21" lengthAdjust="spacingAndGlyphs"><tspan class="u">A</tspan>dd</text>
<rect x="891.500" y="459.500" width="73" height="21" fill="#e1e1e1" stroke="#adadad"/>
<text class="dm" x="928" y="474" textLength="33" lengthAdjust="spacingAndGlyphs"><tspan class="u">D</tspan>elete</text>

<rect x="550.500" y="494.500" width="99" height="53" fill="none" stroke="#dcdcdc"/>
<rect x="555" y="490" width="68" height="10" fill="#f0f0f0"/>
<text class="d" x="556" y="499" textLength="65" lengthAdjust="spacingAndGlyphs">Use labels in</text>
<rect x="559.500" y="509.500" width="12" height="12" fill="#fff" stroke="#333"/>
<text class="d" x="576" y="520" textLength="42" lengthAdjust="spacingAndGlyphs"><tspan class="u">T</tspan>op row</text>
<rect x="559.500" y="528.500" width="12" height="12" fill="#fff" stroke="#333"/>
<text class="d" x="576" y="539" textLength="60" lengthAdjust="spacingAndGlyphs"><tspan class="u">L</tspan>eft column</text>
<rect x="660.500" y="528.500" width="12" height="12" fill="#fff" stroke="#333"/>
<text class="d" x="677" y="539" textLength="137" lengthAdjust="spacingAndGlyphs">Create links to <tspan class="u">s</tspan>ource data</text>

<rect x="808" y="562" width="72" height="20" fill="#e1e1e1" stroke="#0078d7" stroke-width="2"/>
<text class="dm" x="844" y="576" textLength="15" lengthAdjust="spacingAndGlyphs">OK</text>
<rect x="891.500" y="561.500" width="73" height="21" fill="#e1e1e1" stroke="#adadad"/>
<text class="dm" x="928" y="576" textLength="28" lengthAdjust="spacingAndGlyphs">Close</text>
</svg>
</body></html>
